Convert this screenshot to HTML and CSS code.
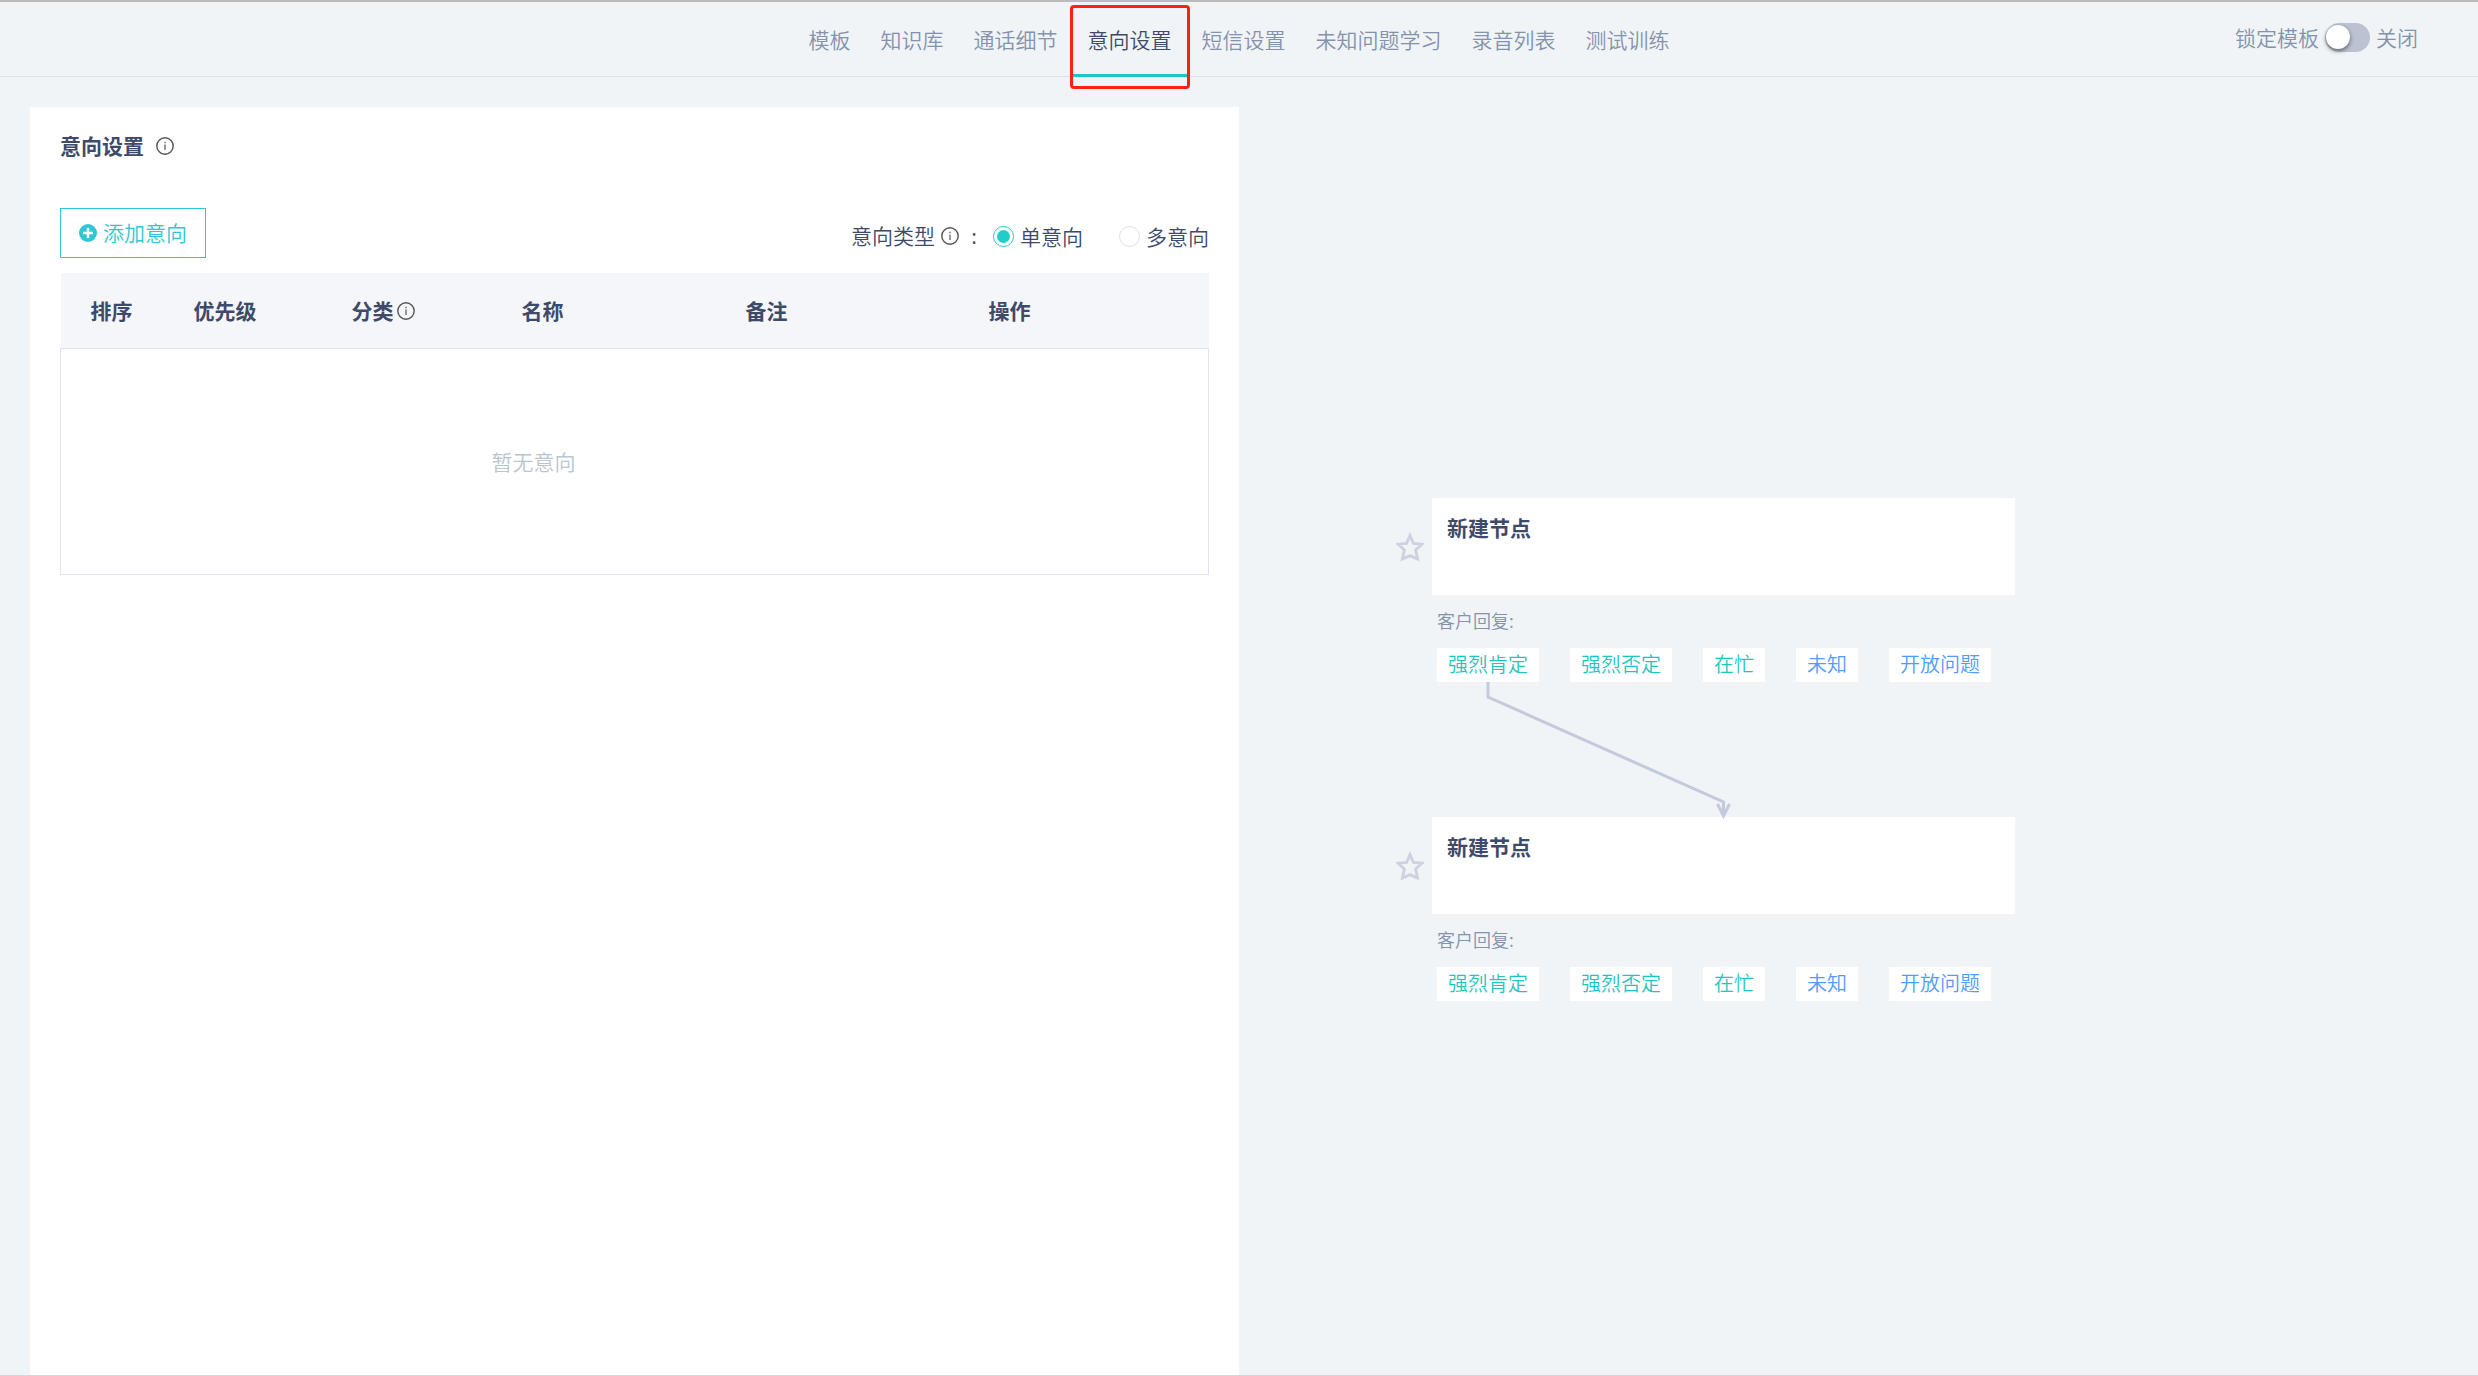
FILE: index.html
```html
<!DOCTYPE html>
<html lang="zh-CN">
<head>
<meta charset="utf-8">
<title>意向设置</title>
<link rel="stylesheet" href="styles.css">
</head>
<body>
<svg class="defs" aria-hidden="true">
  <symbol id="info" viewBox="0 0 18 18">
    <circle cx="9" cy="9" r="8.2" fill="none" stroke="#555" stroke-width="1.4"/>
    <path d="M9 7.4V13M9 4.8V6.2" stroke="#777" stroke-width="1.5"/>
  </symbol>
  <symbol id="star" viewBox="0 0 28 30">
    <path d="M14 3.5L17.4 11.4L26 12.2L19.6 17.9L21.6 27L14 23.6L6.4 27L8.4 17.9L2 12.2L10.6 11.4Z" fill="none" stroke="#cdd1e0" stroke-width="2.8"/>
  </symbol>
</svg>

<header class="topbar">
  <nav class="tabs">
    <a class="tab" href="#">模板</a>
    <a class="tab" href="#">知识库</a>
    <a class="tab" href="#">通话细节</a>
    <a class="tab tab-active" href="#" aria-current="page">意向设置</a>
    <a class="tab" href="#">短信设置</a>
    <a class="tab" href="#">未知问题学习</a>
    <a class="tab" href="#">录音列表</a>
    <a class="tab" href="#">测试训练</a>
  </nav>
  <label class="lock">
    <span>锁定模板</span>
    <input class="switch" type="checkbox" role="switch">
    <span>关闭</span>
  </label>
</header>

<main class="workspace">
  <section class="panel">
    <h1 class="panel-title">意向设置 <svg class="icon"><use href="#info"/></svg></h1>
    <div class="toolbar">
      <button class="add" type="button">
        <svg class="icon" viewBox="0 0 18 18"><circle cx="9" cy="9" r="9" fill="#31c6d3"/><path d="M9 4V14M4 9H14" stroke="#fff" stroke-width="2.4"/></svg>
        添加意向
      </button>
      <div class="types" role="radiogroup" aria-labelledby="types-label">
        <span class="types-label" id="types-label">意向类型<svg class="icon"><use href="#info"/></svg><span>:</span></span>
        <label class="option"><input class="radio" type="radio" name="type" checked>单意向</label>
        <label class="option"><input class="radio" type="radio" name="type">多意向</label>
      </div>
    </div>
    <table class="intents">
      <colgroup>
        <col class="col-sort"><col class="col-priority"><col class="col-class"><col class="col-name"><col class="col-note"><col>
      </colgroup>
      <thead>
        <tr>
          <th>排序</th>
          <th>优先级</th>
          <th><span class="with-icon">分类<svg class="icon"><use href="#info"/></svg></span></th>
          <th>名称</th>
          <th>备注</th>
          <th>操作</th>
        </tr>
      </thead>
      <tbody>
        <tr><td colspan="3"></td><td class="empty" colspan="3">暂无意向</td></tr>
      </tbody>
    </table>
  </section>

  <section class="canvas">
    <article class="node node-first">
      <div class="node-main">
        <button class="star" type="button" aria-label="收藏"><svg class="star-icon"><use href="#star"/></svg></button>
        <h2 class="card">新建节点</h2>
      </div>
      <div class="replies">
        <p class="replies-label">客户回复:</p>
        <ul class="tags">
          <li class="tag">强烈肯定</li>
          <li class="tag">强烈否定</li>
          <li class="tag">在忙</li>
          <li class="tag tag-blue">未知</li>
          <li class="tag tag-blue">开放问题</li>
        </ul>
      </div>
    </article>
    <article class="node node-second">
      <div class="node-main">
        <button class="star" type="button" aria-label="收藏"><svg class="star-icon"><use href="#star"/></svg></button>
        <h2 class="card">新建节点</h2>
      </div>
      <div class="replies">
        <p class="replies-label">客户回复:</p>
        <ul class="tags">
          <li class="tag">强烈肯定</li>
          <li class="tag">强烈否定</li>
          <li class="tag">在忙</li>
          <li class="tag tag-blue">未知</li>
          <li class="tag tag-blue">开放问题</li>
        </ul>
      </div>
    </article>
    <svg class="link" viewBox="0 0 260 140" fill="none" stroke="#c4c9db" stroke-width="3">
      <path d="M9 0V15L244.500 120V134"/>
      <path d="M238.500 122L244.500 134L250.500 122" stroke-width="3"/>
    </svg>
  </section>
</main>
</body>
</html>
```
FILE: styles.css
```css
* {
  box-sizing: border-box;
}

body {
  display: flex;
  flex-direction: column;
  min-height: 100vh;
  margin: 0;
  border-top: 2px solid #bababa;
  border-bottom: 1px solid #d8d3df;
  background: #f0f4f7;
  color: #3e4a69;
  font: 350 21px/30px "Noto Sans CJK SC", sans-serif;
}

h1, h2, p, ul {
  margin: 0;
  padding: 0;
}

button, input {
  margin: 0;
  font: inherit;
}

.defs {
  position: absolute;
  width: 0;
  height: 0;
}

.icon {
  flex: none;
  width: 18px;
  height: 18px;
  margin-top: 2px;
}

/* top bar */
.topbar {
  display: grid;
  grid-template-columns: 1fr auto 1fr;
  border-bottom: 1px solid #dce1f0;
  color: #8492ad;
}

.tabs {
  display: flex;
  grid-column: 2;
  margin-bottom: -1px;
}

.tab {
  position: relative;
  padding: 22px 15px 20px;
  border-bottom: 3px solid transparent;
  color: inherit;
  text-decoration: none;
}

.tab-active {
  border-color: #1fc5c5;
  color: #3e4a69;
}

.tab-active::after {
  position: absolute;
  inset: 3px -3px -15px;
  border: 3px solid #ff2012;
  border-radius: 4px;
  content: "";
}

.lock {
  display: flex;
  align-items: center;
  justify-self: end;
  gap: 6px;
  padding: 0 60px 4px 0;
}

.switch {
  display: flex;
  align-items: center;
  width: 45px;
  height: 29px;
  padding: 0 1px;
  border-radius: 15px;
  background: #bcc2d1;
  appearance: none;
}

.switch::before {
  width: 24px;
  height: 24px;
  border-radius: 50%;
  background: #fff;
  box-shadow: 0 2px 4px rgb(0 0 0 / 50%);
  content: "";
}

/* two halves */
.workspace {
  display: grid;
  flex: 1;
  grid-template-columns: 1fr 1fr;
}

.panel {
  margin: 30px 0 0 30px;
  padding: 23px 30px;
  background: #fff;
}

.panel-title {
  display: flex;
  align-items: center;
  gap: 12px;
  font-size: 21px;
  font-weight: 700;
}

.toolbar {
  display: flex;
  align-items: center;
  justify-content: space-between;
  margin: 48px 0 15px;
}

.add {
  display: flex;
  align-items: center;
  gap: 6px;
  height: 50px;
  padding: 0 18px 2px;
  border: 1px solid #31c6d3;
  background: #fff;
  color: #31c6d3;
}

.types {
  display: flex;
  align-items: center;
  gap: 36px;
  padding-top: 6px;
}

.types-label {
  display: flex;
  align-items: center;
  gap: 6px;
  margin-right: -20px;
  padding-bottom: 2px;
}

.types-label > span {
  width: 12px;
  text-align: right;
}

.option {
  display: flex;
  align-items: center;
  gap: 6px;
}

.radio {
  width: 21px;
  height: 21px;
  border: 1px solid #dddfe9;
  border-radius: 50%;
  appearance: none;
}

.radio:checked {
  padding: 3px;
  border-color: #20cccc;
  background: #20cccc content-box;
}

/* intents table */
.intents {
  width: 100%;
  border-collapse: collapse;
  table-layout: fixed;
}

.intents thead {
  background: #f4f6fa;
}

.intents tbody {
  border: 1px solid #dfe3ec;
}

.intents th {
  height: 75px;
  padding: 0 0 0 30px;
  font-weight: 700;
  text-align: left;
}

.intents td {
  height: 226px;
  padding: 0;
}

.intents .empty {
  color: #b9c6d0;
}

.col-sort { width: 103px; }
.col-priority { width: 158px; }
.col-class { width: 170px; }
.col-name { width: 224px; }
.col-note { width: 243px; }

.with-icon {
  display: flex;
  align-items: center;
  gap: 3px;
}

/* flow canvas */
.canvas {
  position: relative;
}

.node {
  position: absolute;
  left: 157px;
  width: 619px;
}

.node-first { top: 421px; }
.node-second { top: 740px; }

.node-main {
  display: flex;
  align-items: center;
  gap: 8px;
}

.star {
  padding: 0;
  border: 0;
  background: none;
}

.star-icon {
  display: block;
  width: 28px;
  height: 30px;
}

.card {
  flex: 1;
  height: 97px;
  padding: 14px 15px;
  background: #fff;
  font-size: 21px;
  font-weight: 700;
}

.replies {
  padding: 10px 0 0 41px;
}

.replies-label {
  color: #8492ad;
  font-size: 18px;
}

.tags {
  display: flex;
  gap: 31px;
  margin-top: 13px;
  list-style: none;
}

.tag {
  padding: 1px 11px 3px;
  background: #fff;
  color: #1fc5bf;
  font-size: 20px;
}

.tag-blue {
  color: #4f9dff;
}

.link {
  position: absolute;
  top: 605px;
  left: 240px;
  width: 260px;
  height: 140px;
}
```
